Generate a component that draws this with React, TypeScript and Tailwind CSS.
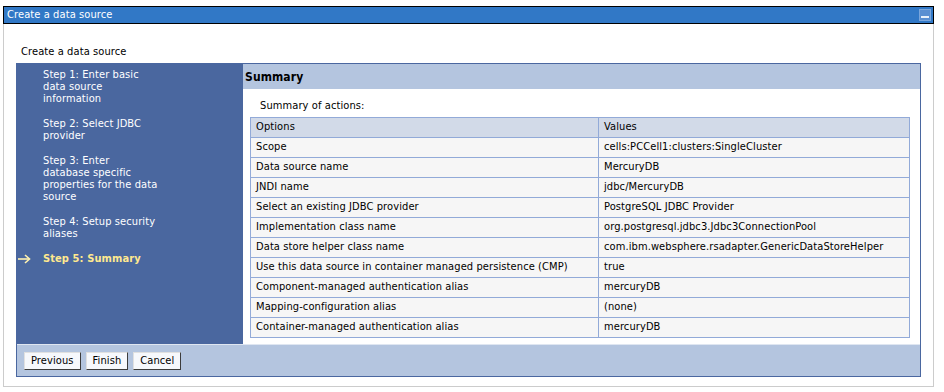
import React from "react";

const rows: [string, string][] = [
  ["Scope", "cells:PCCell1:clusters:SingleCluster"],
  ["Data source name", "MercuryDB"],
  ["JNDI name", "jdbc/MercuryDB"],
  ["Select an existing JDBC provider", "PostgreSQL JDBC Provider"],
  ["Implementation class name", "org.postgresql.jdbc3.Jdbc3ConnectionPool"],
  ["Data store helper class name", "com.ibm.websphere.rsadapter.GenericDataStoreHelper"],
  ["Use this data source in container managed persistence (CMP)", "true"],
  ["Component-managed authentication alias", "mercuryDB"],
  ["Mapping-configuration alias", "(none)"],
  ["Container-managed authentication alias", "mercuryDB"],
];

const steps: { lines: string[]; current?: boolean }[] = [
  { lines: ["Step 1: Enter basic", "data source", "information"] },
  { lines: ["Step 2: Select JDBC", "provider"] },
  { lines: ["Step 3: Enter", "database specific", "properties for the data", "source"] },
  { lines: ["Step 4: Setup security", "aliases"] },
  { lines: ["Step 5: Summary"], current: true },
];

export default function App() {
  return (
    <div
      className="w-[944px] h-[392px] bg-white text-[11px] text-black overflow-hidden"
      style={{ fontFamily: '"DejaVu Sans Condensed", "DejaVu Sans", sans-serif', letterSpacing: "0.1px" }}
    >
      <div className="pt-[6px] pl-[3px]">
        <div className="w-[931px] h-[381px] border-l border-r border-b border-[#cccccc] flex flex-col">
          {/* Title bar */}
          <div className="h-[18px] -mx-px bg-[#3178c6] border border-black flex items-center justify-between pl-[3px] pr-[2px]">
            <span className="text-white leading-[16px]">Create a data source</span>
            <div className="w-[12px] h-[12px] bg-[#5a8fd2] border border-[#7aa6dc] flex items-end justify-center pb-[2px]">
              <div className="w-[8px] h-[2px] bg-[#e8f0fa]" />
            </div>
          </div>

          {/* Heading */}
          <div className="pl-[17px] pt-[21px] h-[39px] leading-[14px]">Create a data source</div>

          {/* Wizard panel */}
          <div className="ml-[12px] w-[905px] border border-[#4a67a0] flex flex-col">
            <div className="flex">
              {/* Nav */}
              <div className="w-[226px] bg-[#4a679f] pt-[5px] text-white leading-[12px]">
                {steps.map((s, i) => (
                  <div key={i} className="flex mb-[13px]">
                    <div className="w-[26px] pl-[1px] shrink-0 flex items-start pt-[1px]">
                      {s.current ? (
                        <svg width="13" height="10" viewBox="0 0 13 10">
                          <path d="M0 5 H11" stroke="#fff2b0" strokeWidth="1.6" fill="none" />
                          <path d="M7 1 L11.5 5 L7 9" stroke="#fff2b0" strokeWidth="1.6" fill="none" />
                        </svg>
                      ) : null}
                    </div>
                    <div className={s.current ? "font-bold text-[#ffe98f]" : ""}>
                      {s.lines.map((l, j) => (
                        <div key={j} className="h-[12px]">{l}</div>
                      ))}
                    </div>
                  </div>
                ))}
              </div>

              {/* Content */}
              <div className="flex-1 bg-white">
                <div className="h-[25px] bg-[#b4c5df] flex items-center pl-[2px] font-bold text-[12px]">Summary</div>
                <div className="pl-[17px] pt-[10px] h-[28px] leading-[14px]">Summary of actions:</div>
                <div className="pl-[7px] pr-[9px] pb-[6px]">
                  <table className="w-[660px] border-collapse">
                    <tbody>
                      <tr className="bg-[#d2dae8]">
                        <td className="w-[348px] h-[20px] border border-[#92aad8] pl-[5px] py-0">Options</td>
                        <td className="h-[20px] border border-[#92aad8] pl-[5px] py-0">Values</td>
                      </tr>
                      {rows.map(([a, b]) => (
                        <tr key={a} className="bg-[#f6f6f6]">
                          <td className="h-[20px] border border-[#92aad8] pl-[5px] py-0 whitespace-nowrap">{a}</td>
                          <td className="h-[20px] border border-[#92aad8] pl-[5px] py-0 whitespace-nowrap">{b}</td>
                        </tr>
                      ))}
                    </tbody>
                  </table>
                </div>
              </div>
            </div>

            {/* Bottom bar */}
            <div className="h-[32px] bg-[#b4c5df] border-t border-[#dfe6f1] flex items-center pl-[7px] pt-[1px] gap-[5px]">
              {["Previous", "Finish", "Cancel"].map((b) => (
                <button
                  key={b}
                  className="h-[18px] px-[6px] bg-[#f6f8fc] border border-t-[#e0e0e0] border-l-[#e0e0e0] border-r-[#3c3c3c] border-b-[#3c3c3c] leading-[16px] text-[11px]"
                >
                  {b}
                </button>
              ))}
            </div>
          </div>
        </div>
      </div>
    </div>
  );
}
